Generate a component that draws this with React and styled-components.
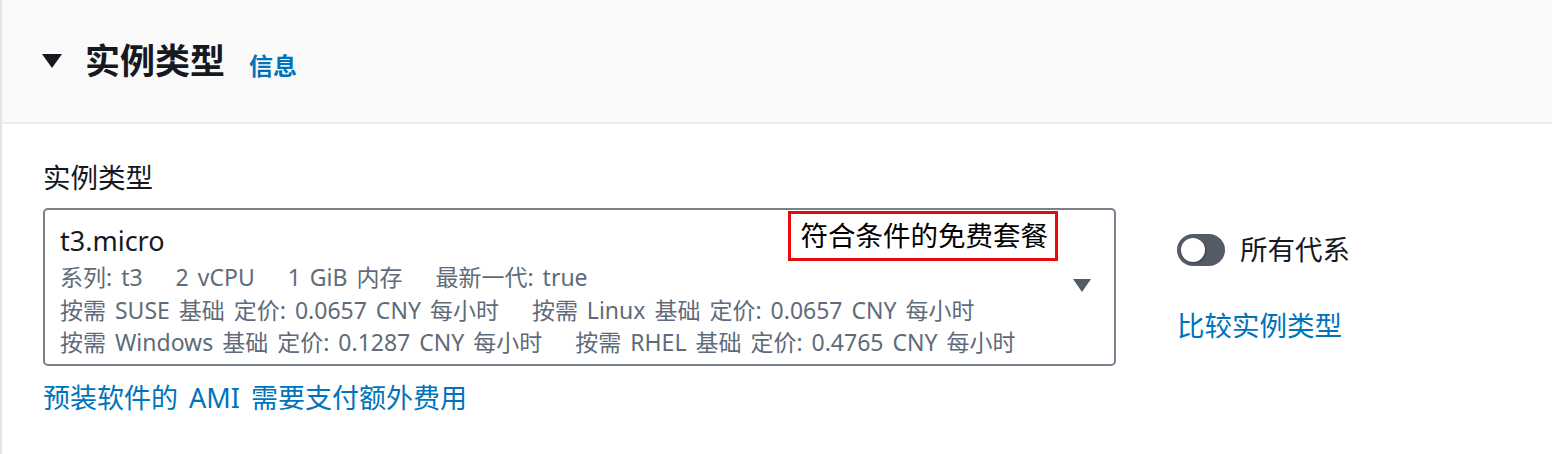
import React from 'react'
import styled, { createGlobalStyle } from 'styled-components'

const GlobalStyle = createGlobalStyle`
  html, body {
    margin: 0;
    padding: 0;
    background: #fff;
  }
  body {
    font-family: "Noto Sans", "Noto Sans CJK SC", sans-serif;
    color: #16191f;
  }
`

const details = [
  ['系列: t3', '2 vCPU', '1 GiB 内存', '最新一代: true'],
  ['按需 SUSE 基础 定价: 0.0657 CNY 每小时', '按需 Linux 基础 定价: 0.0657 CNY 每小时'],
  ['按需 Windows 基础 定价: 0.1287 CNY 每小时', '按需 RHEL 基础 定价: 0.4765 CNY 每小时'],
]

export default function App() {
  return (
    <Container>
      <GlobalStyle />
      <Header>
        <Caret size={20} color="#16191f" />
        <Heading>实例类型</Heading>
        <InfoLink>信息</InfoLink>
      </Header>
      <Body>
        <Label>实例类型</Label>
        <Grid>
          <div>
            <Select>
              <SelectContent>
                <TitleRow>
                  <TypeName>t3.micro</TypeName>
                  <FreeTier>符合条件的免费套餐</FreeTier>
                </TitleRow>
                {details.map((line, i) => (
                  <DetailLine key={i}>
                    {line.map((item) => (
                      <span key={item}>{item}</span>
                    ))}
                  </DetailLine>
                ))}
              </SelectContent>
              <Caret size={18} color="#545b64" />
            </Select>
            <FooterLink>预装软件的 AMI 需要支付额外费用</FooterLink>
          </div>
          <Side>
            <ToggleRow>
              <Toggle><Knob /></Toggle>
              <ToggleText>所有代系</ToggleText>
            </ToggleRow>
            <CompareLink>比较实例类型</CompareLink>
          </Side>
        </Grid>
      </Body>
    </Container>
  )
}

const Container = styled.div`
  min-height: 454px;
  border-left: 2px solid #e3e6e8;
`

const Header = styled.div`
  display: flex;
  align-items: center;
  height: 122px;
  padding-left: 40px;
  background: #fafafa;
  border-bottom: 2px solid #eaeded;
`

const Caret = styled.span`
  width: 0;
  height: 0;
  flex-shrink: 0;
  border-left: ${(p) => p.size / 2}px solid transparent;
  border-right: ${(p) => p.size / 2}px solid transparent;
  border-top: ${(p) => Math.round(p.size * 0.72)}px solid ${(p) => p.color};
`

const Heading = styled.h2`
  margin: 0 0 0 23px;
  font-size: 35px;
  font-weight: 700;
  line-height: 44px;
`

const InfoLink = styled.a`
  margin: 6px 0 0 24px;
  font-size: 24px;
  font-weight: 700;
  color: #0073bb;
`

const Body = styled.div`
  padding: 37px 0 0 41px;
`

const Label = styled.div`
  font-size: 27.5px;
  line-height: 34px;
  margin-bottom: 13px;
`

const Grid = styled.div`
  display: grid;
  grid-template-columns: 1073px auto;
  column-gap: 61px;
`

const Select = styled.div`
  display: flex;
  align-items: center;
  height: 158px;
  box-sizing: border-box;
  padding: 2px 23px 6px 15px;
  border: 2px solid #79818b;
  border-radius: 5px;
`

const SelectContent = styled.div`
  flex: 1;
  margin-right: 15px;
`

const TitleRow = styled.div`
  display: flex;
  align-items: center;
  justify-content: space-between;
  height: 50px;
`

const TypeName = styled.span`
  font-size: 27px;
  padding-top: 8px;
`

const FreeTier = styled.span`
  font-size: 27.5px;
  line-height: 44px;
  padding: 0 7px 0 10px;
  border: 3px solid #e8090c;
  color: #000;
`

const DetailLine = styled.div`
  display: flex;
  gap: 33px;
  font-size: 23px;
  line-height: 32.5px;
  word-spacing: 3px;
  color: #5f6b7a;
  white-space: nowrap;
`

const FooterLink = styled.a`
  display: block;
  margin-top: 15px;
  font-size: 27px;
  line-height: 34px;
  word-spacing: 4px;
  color: #0073bb;
`

const Side = styled.div`
  display: flex;
  flex-direction: column;
  gap: 42px;
  padding-top: 25px;
`

const ToggleRow = styled.div`
  display: flex;
  align-items: center;
  gap: 15px;
`

const Toggle = styled.span`
  position: relative;
  width: 48px;
  height: 32px;
  border-radius: 16px;
  background: #545b64;
`

const Knob = styled.span`
  position: absolute;
  left: 4px;
  top: 4px;
  width: 24px;
  height: 24px;
  border-radius: 50%;
  background: #fff;
  box-shadow: 1px 1px 2px rgba(0, 0, 0, 0.35);
`

const ToggleText = styled.span`
  font-size: 27.5px;
  line-height: 34px;
`

const CompareLink = styled.a`
  font-size: 27.5px;
  line-height: 34px;
  color: #0073bb;
`
